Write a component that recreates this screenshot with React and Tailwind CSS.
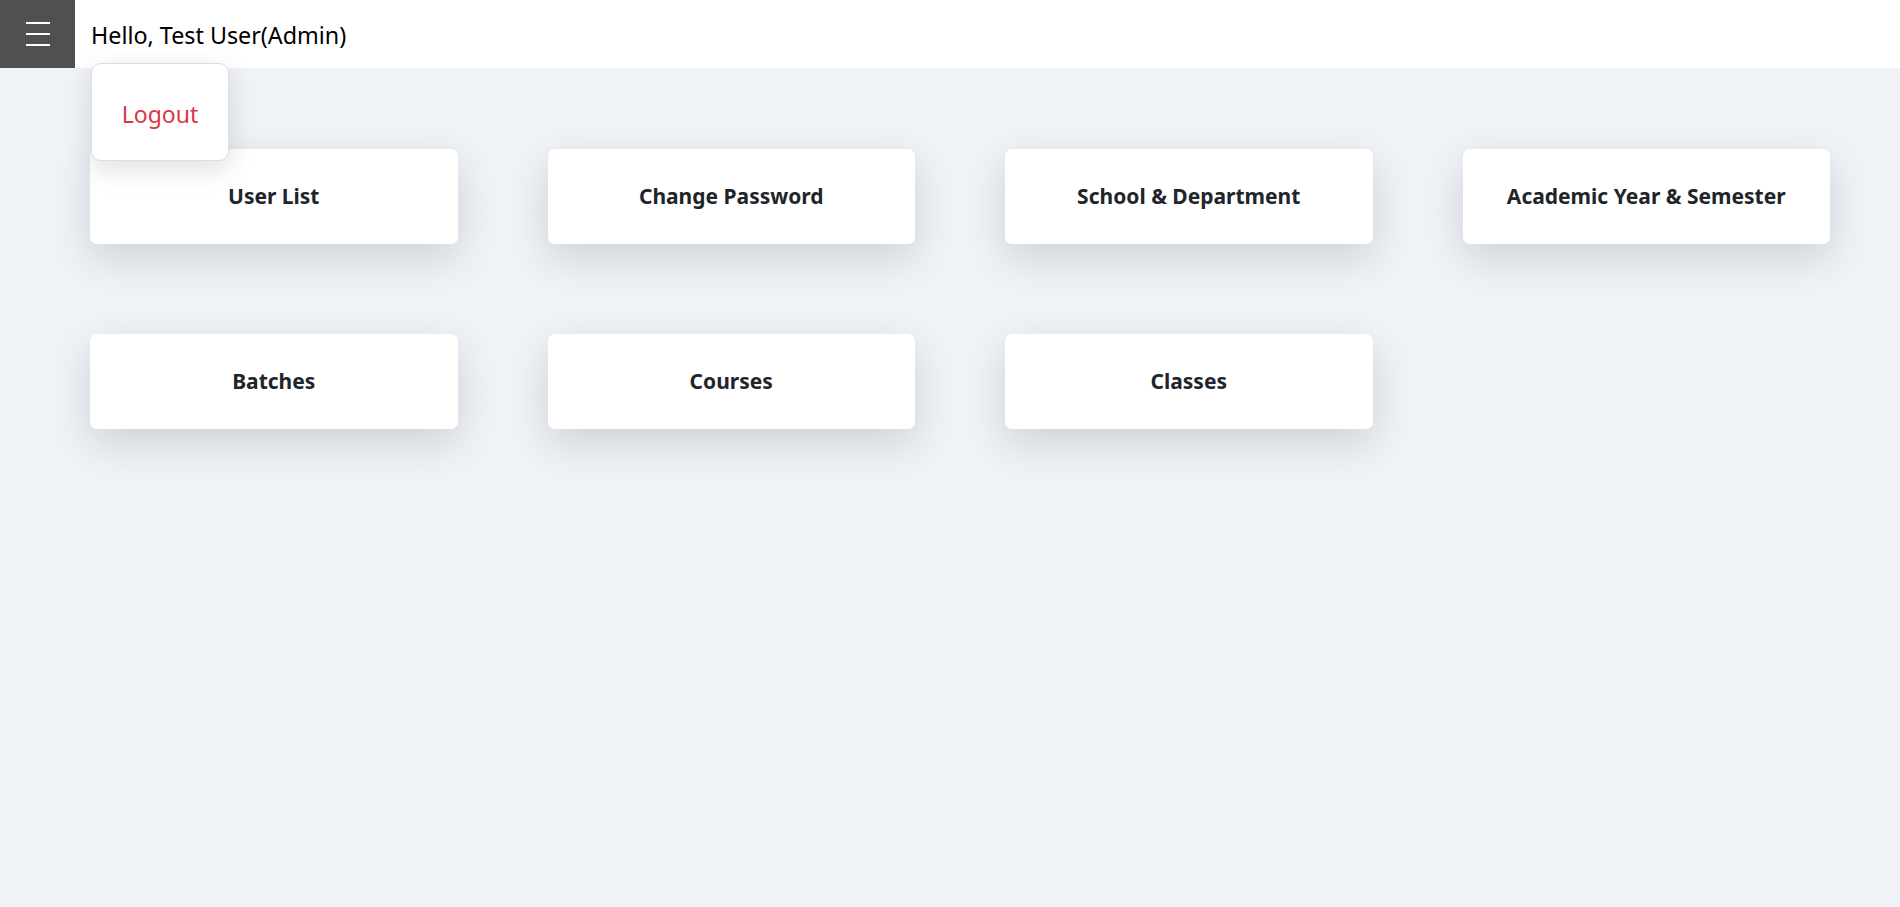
export default function App() {
  const cards = [
    "User List",
    "Change Password",
    "School & Department",
    "Academic Year & Semester",
    "Batches",
    "Courses",
    "Classes",
  ];
  return (
    <div
      className="min-h-[907px] bg-[#eff3f8] relative"
      style={{ fontFamily: '"Noto Sans", "Open Sans", sans-serif' }}
    >
      <header className="h-[68px] bg-white flex items-center">
        <button className="w-[75px] h-[68px] bg-[#505050] flex flex-col items-center justify-center gap-[9px]">
          <span className="block w-[24px] h-[2px] bg-white"></span>
          <span className="block w-[24px] h-[2px] bg-white"></span>
          <span className="block w-[24px] h-[2px] bg-white"></span>
        </button>
        <div className="ml-[16px] pt-[3px] text-[23.3px] text-black leading-none">Hello, Test User(Admin)</div>
      </header>
      <div className="absolute left-[91px] top-[63px] w-[138px] h-[98px] bg-white rounded-[10px] border border-[#dedede] shadow-[0_8px_28px_rgba(0,0,0,0.13)] flex items-center justify-center z-10">
        <span className="text-[23px] text-[#dc3545] pt-[4px]">Logout</span>
      </div>
      <main className="pt-[81px] pl-[90px] pr-[70px]">
        <div className="grid grid-cols-4 gap-[90px]">
          {cards.map((c) => (
            <div
              key={c}
              className="h-[95px] bg-white rounded-[7px] shadow-[0_14px_42px_rgba(0,0,0,0.14)] flex items-center justify-center"
            >
              <span className="text-[21px] font-bold text-[#212529]">{c}</span>
            </div>
          ))}
        </div>
      </main>
    </div>
  );
}
